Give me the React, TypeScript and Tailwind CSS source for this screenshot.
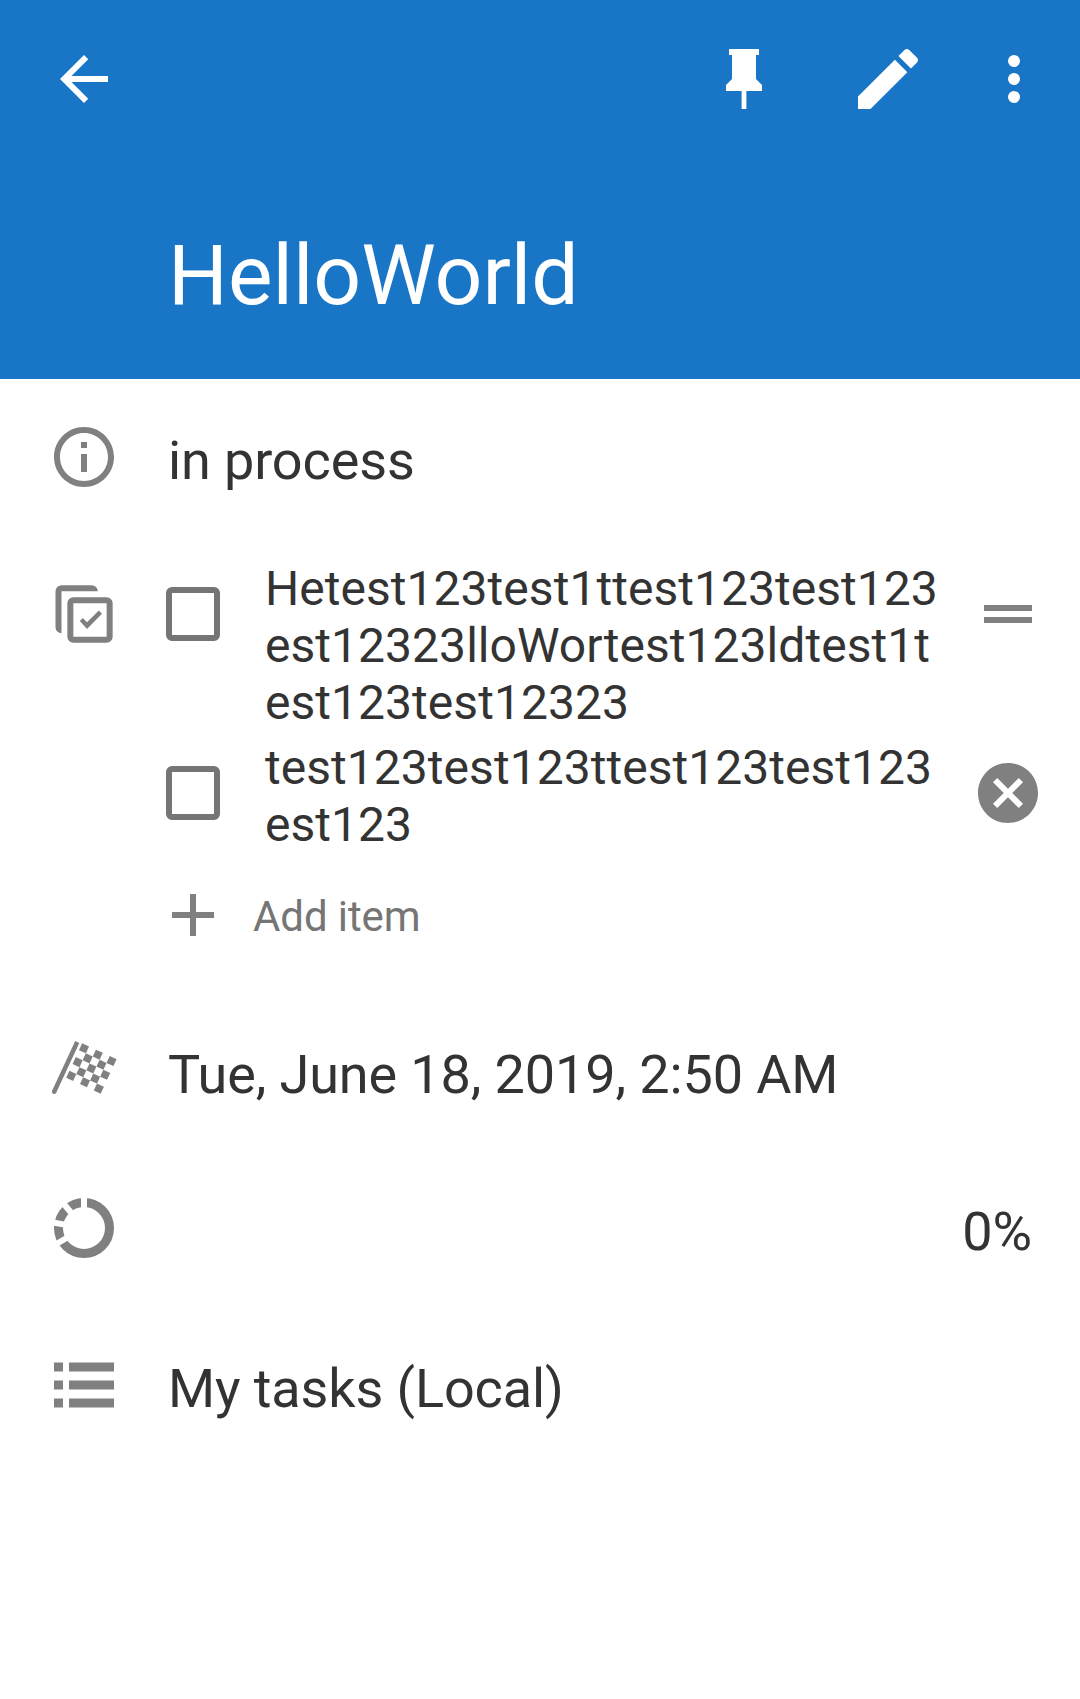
import type { ReactNode } from "react";

function Icon({ children, className = "" }: { children: ReactNode; className?: string }) {
  return (
    <svg viewBox="0 0 24 24" fill="currentColor" className={`block size-[72px] shrink-0 ${className}`}>
      {children}
    </svg>
  );
}

// Column and row positions of the dark cells on the checkered flag.
const flagCells = [
  [0, 0], [2, 0], [4, 0],
  [1, 1], [3, 1],
  [0, 2], [2, 2], [4, 2],
  [1, 3], [3, 3],
  [0, 4], [2, 4], [4, 4],
];

function FlagIcon() {
  return (
    <Icon>
      <path d="M9.75 2.35 2.05 18.9" fill="none" stroke="currentColor" strokeWidth="1.5" />
      <circle cx="2.05" cy="18.9" r=".75" />
      <g transform="translate(12 4.44) rotate(24.8)">
        {flagCells.map(([c, r]) => (
          <rect key={`${c}-${r}`} x={c * 2.53 - 1.265} y={r * 2.53 - 1.265} width="2.53" height="2.53" />
        ))}
      </g>
    </Icon>
  );
}

function ChecklistIcon() {
  return (
    <Icon>
      <path d="M4.5 2.4H14.6a2 2 0 0 1 2 2H4.5V18.4a2 2 0 0 1-2-2V4.4a2 2 0 0 1 2-2Z" />
      <rect x="7.45" y="7.45" width="13.1" height="13.1" rx="1" fill="none" stroke="currentColor" strokeWidth="2" />
      <path d="m10.6 14.3 1-1 1.4 1.45 3.95-3.9 1.05 1.1-5 5.05Z" />
    </Icon>
  );
}

function ProgressIcon() {
  return (
    <Icon>
      <circle cx="12" cy="12" r="8.5" fill="none" stroke="currentColor" strokeWidth="3" />
      <g stroke="#fff" strokeWidth="2">
        <path d="M12 6V1" />
        <path d="M12 6V1" transform="rotate(-40 12 12)" />
        <path d="M12 6V1" transform="rotate(-80 12 12)" />
        <path d="M12 6V1" transform="rotate(-120 12 12)" />
      </g>
    </Icon>
  );
}

function Row({ icon, children }: { icon: ReactNode; children: ReactNode }) {
  return (
    <section className="flex h-[157px] items-start gap-12 px-12">
      <div className="mt-[42px] text-[#808080]">{icon}</div>
      <div className="mt-[50px] flex-1 text-[54px] leading-[64px] tracking-[-0.12px] whitespace-nowrap">{children}</div>
    </section>
  );
}

function CheckItem({ lines, action }: { lines: string[]; action: ReactNode }) {
  return (
    <li className="flex items-start">
      <div role="checkbox" aria-checked="false" className="mt-[27px] size-[54px] rounded-[6px] border-[6px] border-[#757575]" />
      <p className="ml-[45px] w-[707px] pb-2 text-[48px] leading-[57px] tracking-[0.04px] whitespace-nowrap">
        {lines.map((l) => (
          <span key={l} className="block">{l}</span>
        ))}
      </p>
      <div className="mt-[18px] text-[#808080]">{action}</div>
    </li>
  );
}

export default function App() {
  return (
    <main className="h-[1699px] w-[1080px] overflow-hidden bg-white font-['Roboto',sans-serif] text-[#333333]">
      <header className="h-[379px] bg-[#1976c7] pt-[43px] text-white">
        <nav className="flex pl-12 pr-[30px]">
          <Icon className="mr-auto">
            <path d="M20 11H7.83l5.59-5.59L12 4l-8 8 8 8 1.41-1.41L7.83 13H20v-2z" />
          </Icon>
          <Icon className="mr-[69px]">
            <path d="M16 12V4h1V2H7v2h1v8l-2 2v2h5.2v6h1.6v-6H18v-2l-2-2Z" />
          </Icon>
          <Icon className="mr-[57px]">
            <path
              transform="translate(3 2) scale(1.1111) translate(-3 -3)"
              d="M3 17.25V21h3.75L17.81 9.94l-3.75-3.75L3 17.25zM20.71 7.04c.39-.39.39-1.02 0-1.41l-2.34-2.34c-.39-.39-1.02-.39-1.41 0l-1.83 1.83 3.75 3.75 1.83-1.83z"
            />
          </Icon>
          <Icon>
            <circle cx="12" cy="6" r="2" />
            <circle cx="12" cy="12" r="2" />
            <circle cx="12" cy="18" r="2" />
          </Icon>
        </nav>
        <h1 className="mt-[111px] ml-[168px] text-[84px] leading-[100px]">HelloWorld</h1>
      </header>

      <Row
        icon={
          <Icon>
            <path d="M11 7h2v2h-2zm0 4h2v6h-2zm1-9C6.48 2 2 6.48 2 12s4.48 10 10 10 10-4.48 10-10S17.52 2 12 2zm0 18c-4.41 0-8-3.59-8-8s3.59-8 8-8 8 3.59 8 8-3.59 8-8 8z" />
          </Icon>
        }
      >
        in process
      </Row>

      <section className="flex h-[457px] items-start pl-12">
        <div className="mt-[42px] text-[#808080]">
          <ChecklistIcon />
        </div>
        <div className="mt-6 ml-[46px]">
          <ul>
            <CheckItem
              lines={["Hetest123test1ttest123test123", "est12323lloWortest123ldtest1t", "est123test12323"]}
              action={
                <Icon>
                  <path d="M20 9H4v2h16V9zM4 15h16v-2H4v2z" />
                </Icon>
              }
            />
            <CheckItem
              lines={["test123test123ttest123test123", "est123"]}
              action={
                <Icon>
                  <path d="M12 2C6.47 2 2 6.47 2 12s4.47 10 10 10 10-4.47 10-10S17.53 2 12 2zm5 13.59L15.59 17 12 13.41 8.41 17 7 15.59 10.59 12 7 8.41 8.41 7 12 10.59 15.59 7 17 8.41 13.41 12 17 15.59z" />
                </Icon>
              }
            />
          </ul>
          <div className="mt-[18px] -ml-[9px] flex items-start text-[42px] leading-[50px] tracking-[-0.1px] text-[#757575]">
            <Icon className="text-[#808080]">
              <path d="M19 13h-6v6h-2v-6H5v-2h6V5h2v6h6v2z" />
            </Icon>
            <span className="mt-[13px] ml-6">Add item</span>
          </div>
        </div>
      </section>

      <Row icon={<FlagIcon />}>Tue, June 18, 2019, 2:50 AM</Row>

      <Row icon={<ProgressIcon />}>
        <div className="text-right">0%</div>
      </Row>

      <Row
        icon={
          <Icon>
            <path d="M2 4.5h3v3H2zM7 4.5h15v3H7zM2 10.5h3v3H2zM7 10.5h15v3H7zM2 16.5h3v3H2zM7 16.5h15v3H7z" />
          </Icon>
        }
      >
        My tasks (Local)
      </Row>
    </main>
  );
}
